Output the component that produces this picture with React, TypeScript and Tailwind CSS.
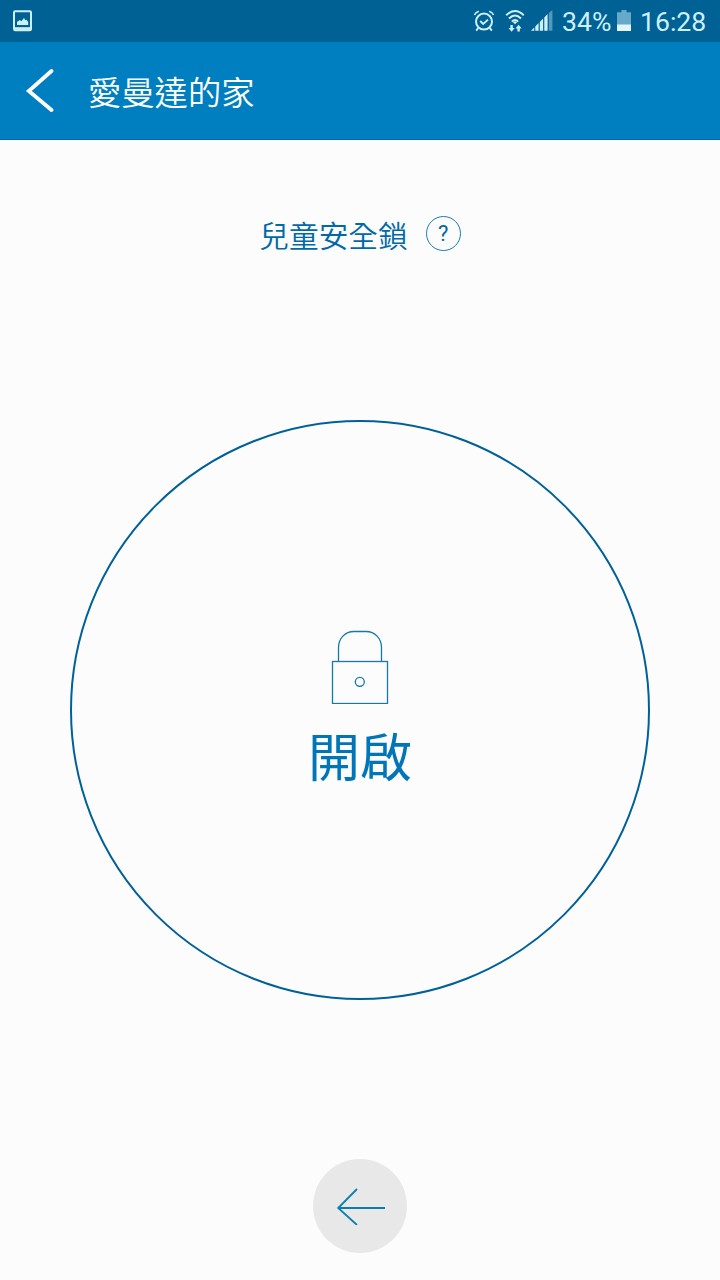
import React from 'react';

const StatusBar: React.FC = () => (
  <div className="flex h-[42px] w-full items-center justify-between bg-[#006194] pr-[13px] pl-3 text-[#cdf0fb]">
    {/* Screenshot notification */}
    <svg className="h-[22px] w-[22px]" viewBox="0 0 22 22" fill="none">
      <rect x="2" y="1.2" width="17" height="19" rx="1.2" stroke="currentColor" strokeWidth="2" />
      <path d="M2.5 17.2h16v2.6h-16z" fill="currentColor" />
      <path d="M5 15v-3l2.8-2 1.6 1.2L12 8l1.4 2.3 1.2-.6L16.2 12v3z" fill="currentColor" />
    </svg>

    <div className="flex items-center">
      {/* Alarm */}
      <svg className="mr-[10px] h-[22px] w-[22px]" viewBox="0 0 22 22" fill="none" stroke="currentColor">
        <circle cx="11" cy="11.6" r="8" strokeWidth="2" />
        <path d="M7.2 11l3 3 4.8-4.4" strokeWidth="1.9" />
        <path d="M1.4 5Q2.6 2.2 5.8 1.2M20.6 5Q19.4 2.2 16.2 1.2" strokeWidth="1.7" />
        <path d="M5.2 18l-2 2.6M16.8 18l2 2.6" strokeWidth="2" />
      </svg>

      {/* Wi-Fi with traffic arrows */}
      <svg className="mr-[6px] h-[24px] w-5" viewBox="0 0 20 24" fill="none" stroke="currentColor">
        <path d="M1.2 6.2Q10-2.2 18.8 6.2" strokeWidth="2" />
        <path d="M4 9.5Q10 3.6 16 9.5" strokeWidth="2" />
        <path d="M6.8 12.6Q10 9.2 13.2 12.6" strokeWidth="2" />
        <path d="M10 15.2l-2.2-2.2Q10 11.3 12.2 13z" fill="currentColor" stroke="none" />
        <path d="M5.4 16h2.4v3h1.9l-3.1 3.8L3.5 19h1.9zM12.4 22.6h2.4v-3h1.9l-3.1-3.8-3.1 3.8h1.9z" fill="currentColor" stroke="none" />
      </svg>

      {/* Signal strength */}
      <svg className="mr-[9px] h-[22px] w-[22px]" viewBox="0 0 22 22" fill="currentColor">
        <path d="M0 20.7l3.3-3.3v3.3zM4.3 16.4l3.3-3.3v7.6H4.3zM8.8 11.9l3.3-3.3v12.1H8.8zM13.3 7.4l3.3-3.3v16.6h-3.3z" />
        <path d="M17.8 2.9L21.4 0v20.7h-3.6z" opacity=".4" />
      </svg>

      <span className="w-[50px] pt-0.5 font-[Roboto] text-[26.6px] leading-none font-normal whitespace-nowrap">34%</span>

      {/* Battery */}
      <svg className="mr-[7px] ml-[5px] h-[22px] w-4" viewBox="0 0 16 22">
        <path d="M0 2.3h4.4V0h5.2v2.3H14v12H0z" fill="#66a9c9" />
        <path d="M0 14.3h14V21H0z" fill="#e2f5fb" />
      </svg>

      <span className="w-[67px] pt-0.5 font-[Roboto] text-[26.6px] leading-none font-normal whitespace-nowrap">16:28</span>
    </div>
  </div>
);

const App: React.FC = () => {
  return (
    <div className="flex h-[1280px] w-[720px] flex-col items-center overflow-hidden bg-[#fcfcfc] font-['Noto_Sans_CJK_TC','Noto_Sans',sans-serif]">
      <StatusBar />

      {/* App bar */}
      <header className="flex h-[98px] w-full items-center border-b border-[#006aa8] bg-[#007fc0] pl-6">
        <button className="mr-[33px]">
          <svg className="h-[44px] w-[31px]" viewBox="0 0 31 44" fill="none" stroke="#fff" strokeWidth="3.8">
            <path d="M27.5 2L4.8 22l22.7 19" strokeLinecap="round" />
          </svg>
        </button>
        <h1 className="text-[33.3px] leading-none font-[350] text-white">愛曼達的家</h1>
      </header>

      <main className="flex w-full grow flex-col items-center">
        <div className="mt-[75px] flex h-[36px] items-center">
          <h2 className="pt-[3px] text-[29.7px] leading-none font-[350] text-[#0069a8]">兒童安全鎖</h2>
          <button className="ml-[18px] flex h-[35px] w-[35px] items-center justify-center rounded-full border border-[#1b7dae] text-[#0069a0]">
            <span className="pt-px font-[Roboto] text-[22px] leading-none">?</span>
          </button>
        </div>

        {/* Lock toggle */}
        <button className="mt-[169px] flex h-[580px] w-[580px] shrink-0 flex-col items-center rounded-full border-2 border-[#00609a] pt-[208px]">
          <svg className="h-[74px] w-[58px]" viewBox="0 0 58 74" fill="none" stroke="#1679a8" strokeWidth="1.3">
            <path d="M7.5 31V17.5C7.5 8.5 14 1.5 23 1.5h12c9 0 15.5 7 15.5 16V31" />
            <rect x="1.5" y="31.5" width="55" height="42" />
            <circle cx="28.8" cy="51.8" r="4.5" />
          </svg>
          <span className="mt-[25px] text-[52px] leading-none font-normal text-[#0075b8]">開啟</span>
        </button>

        <button className="mt-[159px] flex h-[94px] w-[94px] items-center justify-center rounded-full bg-[#e8e8e8]">
          <svg className="h-[38px] w-[50px]" viewBox="0 0 50 38" fill="none" stroke="#087fae" strokeWidth="1.8">
            <path d="M22 2L3.2 21l18.8 17M3.2 21h47.5" />
          </svg>
        </button>
      </main>
    </div>
  );
};

export default App;
